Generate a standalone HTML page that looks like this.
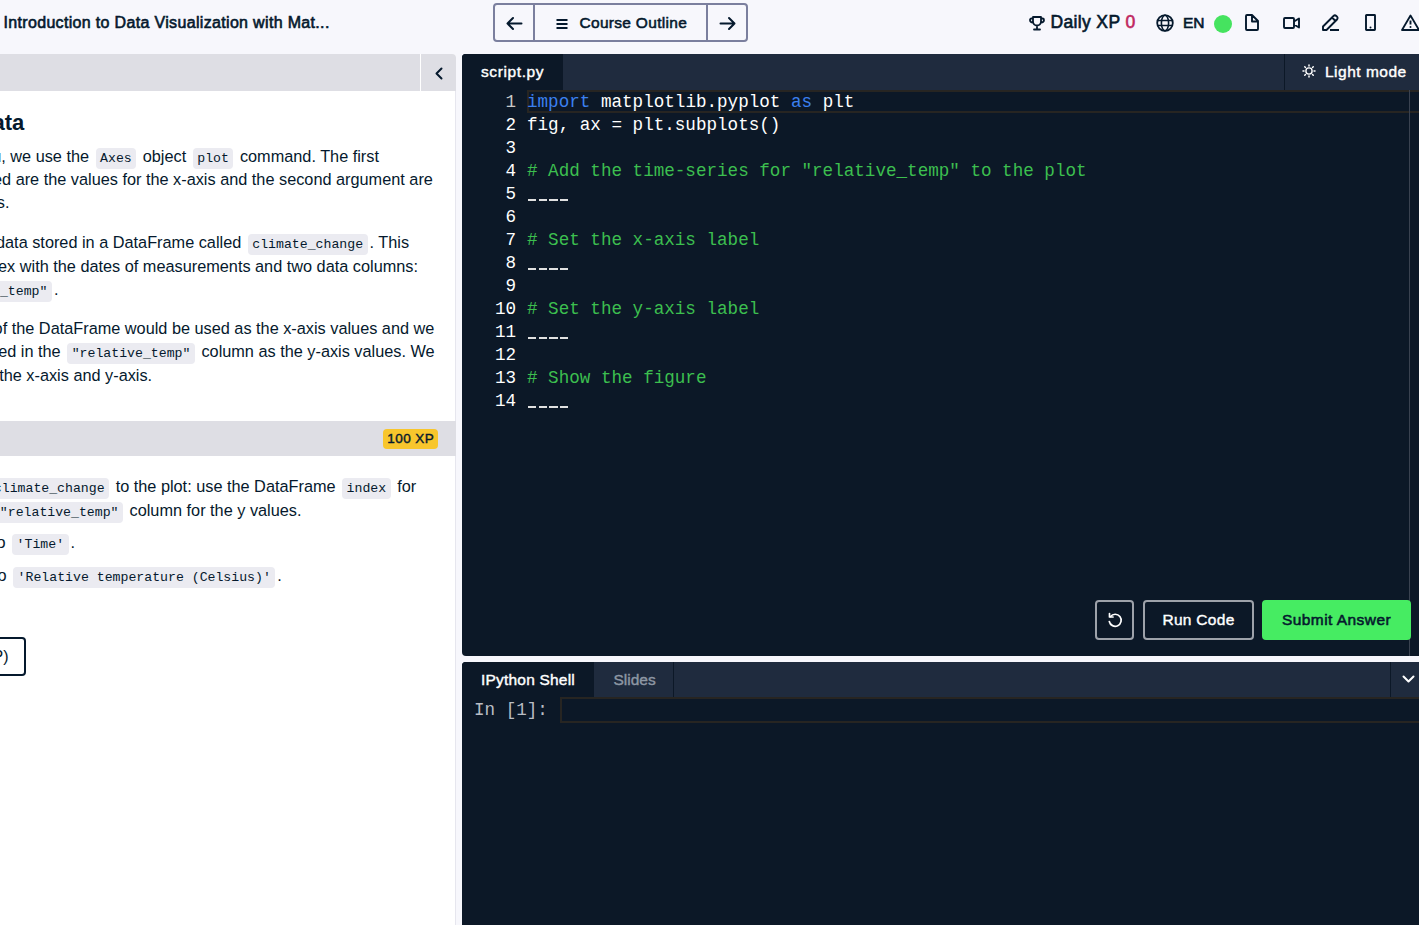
<!DOCTYPE html>
<html><head><meta charset="utf-8">
<style>
*{box-sizing:border-box;margin:0;padding:0}
html,body{width:1419px;height:925px;overflow:hidden;background:#f7f7fc;font-family:"Liberation Sans",sans-serif;color:#05192d}
.a{position:absolute}
#title{position:absolute;left:3.5px;top:12.5px;font-size:16px;letter-spacing:0.33px;font-weight:normal;-webkit-text-stroke:0.6px #05192d;white-space:nowrap;line-height:20px}
#nav{position:absolute;left:493px;top:3px;width:255px;height:39px;border:2px solid #7b7f9e;border-radius:4px}
#nav .d{position:absolute;top:0;width:2px;height:35px;background:#7b7f9e}
#nav .t{position:absolute;left:84.5px;top:9px;font-size:15.5px;letter-spacing:0.3px;font-weight:normal;-webkit-text-stroke:0.55px #05192d;line-height:18px;white-space:nowrap}
.tb{position:absolute;font-size:17.5px;line-height:20px;white-space:nowrap;font-weight:normal;-webkit-text-stroke:0.6px #05192d}
#left{position:absolute;left:0;top:54px;width:456px;height:871px;background:#fff;border-top-right-radius:4px;overflow:hidden}
#lscroll{position:absolute;left:455px;top:91px;width:1px;height:330px;background:#e6e6ee}
#lscroll2{position:absolute;left:455px;top:456px;width:1px;height:469px;background:#e6e6ee}
#lhead{position:absolute;left:0;top:0;width:456px;height:37px;background:#dedee4}
#lhead .dv{position:absolute;left:420px;top:0;width:1px;height:37px;background:#fff}
.ln{position:absolute;white-space:nowrap;font-size:16.3px;line-height:23px;color:#05192d;height:23px}
code{display:inline-block;font-family:"Liberation Mono",monospace;font-size:13.2px;line-height:21px;height:21px;background:#ebebf1;border-radius:4px;padding:0 4.5px;margin:0 2px;color:#05192d;vertical-align:baseline;position:relative;top:-0.5px}
#right{position:absolute;left:462px;top:54px;width:957px;height:602px;background:#0c1827;border-top-left-radius:4px;border-bottom-left-radius:4px;overflow:hidden}
#rtabs{position:absolute;left:0;top:0;width:957px;height:36px;background:#1f2b3e}
.tab{position:absolute;top:0;height:36px;font-size:15.5px;letter-spacing:0.3px;font-weight:normal;-webkit-text-stroke:0.4px currentColor;line-height:36px;color:#fff;white-space:nowrap}
.cl{position:absolute;left:65px;font-family:"Liberation Mono",monospace;font-size:17.6px;line-height:23px;height:23px;white-space:pre;color:#fff}
.nm{position:absolute;left:0;width:54px;text-align:right;font-family:"Liberation Mono",monospace;font-size:17.6px;line-height:23px;height:23px;color:#fff}
.kw{color:#3b80f0}
.us{position:absolute;left:66px;width:42.3px;height:2px;background:repeating-linear-gradient(90deg,#e0e0e0 0 8.4px,transparent 8.4px 10.58px)}
.cm{color:#3cbf4f}
#shell{position:absolute;left:462px;top:662px;width:957px;height:263px;background:#0c1827;border-top-left-radius:4px;overflow:hidden}
#stabs{position:absolute;left:0;top:0;width:957px;height:35px;background:#1f2b3e}
.btn{position:absolute;top:546px;height:40px;border:2px solid #9ea2aa;border-radius:4px;color:#fff;font-weight:normal;-webkit-text-stroke:0.4px currentColor;letter-spacing:0.3px;font-size:15.5px;line-height:36px;text-align:center;white-space:nowrap}
svg{position:absolute;overflow:visible}
</style></head>
<body>
<div id="title">Introduction to Data Visualization with Mat...</div>
<div id="nav">
  <div class="d" style="left:38px"></div><div class="d" style="left:211px"></div>
  <svg style="left:11px;top:12px" width="17" height="13" viewBox="0 0 17 13"><path d="M1.5 6.5H15.5M7 1L1.5 6.5L7 12" fill="none" stroke="#05192d" stroke-width="2" stroke-linecap="round" stroke-linejoin="round"/></svg>
  <svg style="left:61px;top:13.5px" width="12" height="10" viewBox="0 0 12 10"><path d="M0.5 1H11.5M0.5 5H11.5M0.5 9H11.5" fill="none" stroke="#05192d" stroke-width="2"/></svg>
  <div class="t">Course Outline</div>
  <svg style="left:223.5px;top:12px" width="17" height="13" viewBox="0 0 17 13"><path d="M1.5 6.5H15.5M10 1L15.5 6.5L10 12" fill="none" stroke="#05192d" stroke-width="2" stroke-linecap="round" stroke-linejoin="round"/></svg>
</div>

<!-- top right -->
<svg style="left:1029px;top:16px" width="16" height="15" viewBox="0 0 16 15"><path d="M4 1H12V5.5C12 7.7 10.2 9.5 8 9.5C5.8 9.5 4 7.7 4 5.5Z M4 2.5H2.5C1.7 2.5 1 3.2 1 4C1 5.4 2.3 6.5 4.2 6.5 M12 2.5H13.5C14.3 2.5 15 3.2 15 4C15 5.4 13.7 6.5 11.8 6.5 M8 9.5V13.5 M5 13.5H11" fill="none" stroke="#05192d" stroke-width="1.8" stroke-linejoin="round" stroke-linecap="round"/></svg>
<div class="tb" style="left:1050.5px;top:11.5px;letter-spacing:0.35px">Daily XP</div>
<div class="tb" style="left:1125.5px;top:11.5px;color:#c0265e;-webkit-text-stroke:0.6px #c0265e">0</div>
<svg style="left:1156px;top:14px" width="18" height="18" viewBox="0 0 18 18"><circle cx="9" cy="9" r="7.8" fill="none" stroke="#05192d" stroke-width="1.8"/><ellipse cx="9" cy="9" rx="3.6" ry="7.8" fill="none" stroke="#05192d" stroke-width="1.6"/><path d="M1.5 6.5H16.5M1.5 11.5H16.5" stroke="#05192d" stroke-width="1.6"/></svg>
<div class="tb" style="left:1183px;top:12.5px;font-size:15.5px">EN</div>
<div class="a" style="left:1214px;top:15px;width:18px;height:18px;border-radius:50%;background:#45e35f"></div>
<svg style="left:1245px;top:14px" width="14" height="17" viewBox="0 0 14 17"><path d="M1 2C1 1.4 1.4 1 2 1H7L13 7V15C13 15.6 12.6 16 12 16H2C1.4 16 1 15.6 1 15Z M7 1V7.5H13" fill="none" stroke="#05192d" stroke-width="1.9" stroke-linejoin="round"/></svg>
<svg style="left:1283px;top:17px" width="17" height="12" viewBox="0 0 17 12"><path d="M1 2C1 1.4 1.4 1 2 1H10C10.6 1 11 1.4 11 2V10C11 10.6 10.6 11 10 11H2C1.4 11 1 10.6 1 10Z M11 4.5L16 1.5V10.5L11 7.5" fill="none" stroke="#05192d" stroke-width="1.9" stroke-linejoin="round"/></svg>
<svg style="left:1322px;top:14px" width="18" height="17" viewBox="0 0 18 17"><path d="M1 16V12.5L11.5 2C12.3 1.2 13.5 1.2 14.3 2L15 2.7C15.8 3.5 15.8 4.7 15 5.5L4.5 16Z M10 3.5L13.5 7 M8 16H17" fill="none" stroke="#05192d" stroke-width="1.9" stroke-linejoin="round"/></svg>
<svg style="left:1365px;top:14px" width="11" height="17" viewBox="0 0 11 17"><path d="M1 1.5C1 1.2 1.2 1 1.5 1H9.5C9.8 1 10 1.2 10 1.5V15.5C10 15.8 9.8 16 9.5 16H1.5C1.2 16 1 15.8 1 15.5Z" fill="none" stroke="#05192d" stroke-width="1.9"/><circle cx="5.5" cy="13.4" r="1" fill="#05192d"/></svg>
<svg style="left:1401px;top:14px" width="19" height="17" viewBox="0 0 19 17"><path d="M9.5 1.5L18 16H1Z" fill="none" stroke="#05192d" stroke-width="1.8" stroke-linejoin="round"/><path d="M9.5 6.5V10.5" stroke="#05192d" stroke-width="1.9"/><circle cx="9.5" cy="13" r="1" fill="#05192d"/></svg>

<div id="left">
  <div id="lhead"><div class="dv"></div>
    <svg style="left:435px;top:12.5px" width="8" height="13" viewBox="0 0 8 13"><path d="M6.5 1.5L1.5 6.5L6.5 11.5" fill="none" stroke="#05192d" stroke-width="2" stroke-linecap="round" stroke-linejoin="round"/></svg>
  </div>
  <div class="ln" id="hd" style="left:-21px;top:55.8px;font-size:22px;font-weight:bold;line-height:26px">data</div>
  <div class="ln" id="l1" style="left:-25px;top:91px">you, we use the <code>Axes</code> object <code>plot</code> command. The first</div>
  <div class="ln" id="l2" style="left:-7px;top:114px">ed are the values for the x-axis and the second argument are</div>
  <div class="ln" id="l3" style="left:-12.3px;top:137px">es.</div>
  <div class="ln" id="l4" style="left:-4px;top:177px">data stored in a DataFrame called <code>climate_change</code>. This</div>
  <div class="ln" id="l5" style="left:-11px;top:201px">dex with the dates of measurements and two data columns:</div>
  <div class="ln" id="l6" style="left:-77.8px;top:224px"><code>"relative_temp"</code>.</div>
  <div class="ln" id="l7" style="left:-6.4px;top:263px">of the DataFrame would be used as the x-axis values and we</div>
  <div class="ln" id="l8" style="left:-19px;top:286px">used in the <code>"relative_temp"</code> column as the y-axis values. We</div>
  <div class="ln" id="l9" style="left:-0.8px;top:310px">the x-axis and y-axis.</div>
  <div class="a" style="left:0;top:367px;width:456px;height:35px;background:#dedee4"></div>
  <div class="a" style="left:383px;top:375px;width:55px;height:20px;background:#f8c62c;border-radius:4px;font-size:13.5px;font-weight:normal;-webkit-text-stroke:0.4px #05192d;line-height:20px;text-align:center;letter-spacing:0.45px;padding-left:0.45px">100 XP</div>
  <div class="ln" id="l10" style="left:-12.7px;top:421px"><code>climate_change</code> to the plot: use the DataFrame <code>index</code> for</div>
  <div class="ln" id="l11" style="left:-6.7px;top:445px"><code>"relative_temp"</code> column for the y values.</div>
  <div class="ln" id="l12" style="left:-8px;top:477px">to <code>'Time'</code>.</div>
  <div class="ln" id="l13" style="left:-7px;top:510px">to <code>'Relative temperature (Celsius)'</code>.</div>
  <div class="a" id="hint" style="left:-200px;top:583px;width:226px;height:39px;border:2px solid #05192d;border-radius:4px;font-size:16px;font-weight:normal;line-height:35px;text-align:right;padding-right:15.5px;white-space:nowrap">Take Hint (-30 XP)</div>
</div>
<div id="lscroll"></div><div id="lscroll2"></div>

<div id="right">
  <div id="rtabs">
    <div class="tab" style="left:0;width:101px;background:#0c1827;padding-left:19px;letter-spacing:0.6px">script.py</div>
    <div class="a" style="left:822px;top:0;width:1px;height:36px;background:#0c1827"></div>
    <svg style="left:840.1px;top:10.1px" width="14" height="14" viewBox="0 0 14 14"><circle cx="7" cy="7" r="3.1" fill="none" stroke="#fff" stroke-width="1.4"/><path d="M12.00 7.00L13.00 7.00M10.54 10.54L11.24 11.24M7.00 12.00L7.00 13.00M3.46 10.54L2.76 11.24M2.00 7.00L1.00 7.00M3.46 3.46L2.76 2.76M7.00 2.00L7.00 1.00M10.54 3.46L11.24 2.76" stroke="#fff" stroke-width="1.5" stroke-linecap="round"/></svg>
    <div class="tab" style="left:863px;letter-spacing:0.5px">Light mode</div>
  </div>
  <div class="a" style="left:65px;top:36px;width:892px;height:23px;border:2px solid #272522;border-right:none"></div>
  <div class="a" style="left:947px;top:36px;width:1px;height:566px;background:#3a4250"></div>
  <div class="a" style="left:0;top:1px;width:957px;height:400px"><div class="nm" style="top:36px;color:#c8c8c8">1</div><div class="cl" style="top:36px"><span class="kw">import</span> matplotlib.pyplot <span class="kw">as</span> plt</div>
  <div class="nm" style="top:59px">2</div><div class="cl" style="top:59px">fig, ax = plt.subplots()</div>
  <div class="nm" style="top:82px">3</div>
  <div class="nm" style="top:105px">4</div><div class="cl cm" style="top:105px"># Add the time-series for "relative_temp" to the plot</div>
  <div class="nm" style="top:128px">5</div>
  <div class="nm" style="top:151px">6</div>
  <div class="nm" style="top:174px">7</div><div class="cl cm" style="top:174px"># Set the x-axis label</div>
  <div class="nm" style="top:197px">8</div>
  <div class="nm" style="top:220px">9</div>
  <div class="nm" style="top:243px">10</div><div class="cl cm" style="top:243px"># Set the y-axis label</div>
  <div class="nm" style="top:266px">11</div>
  <div class="nm" style="top:289px">12</div>
  <div class="nm" style="top:312px">13</div><div class="cl cm" style="top:312px"># Show the figure</div>
  <div class="nm" style="top:335px">14</div></div><div class="us" style="top:145px"></div><div class="us" style="top:214px"></div><div class="us" style="top:283px"></div><div class="us" style="top:352px"></div>

  <div class="btn" style="left:633px;width:39px">
    <svg style="left:10px;top:10px" width="16" height="16" viewBox="0 0 16 16"><path d="M3.5 4.5A6 6 0 1 1 2.3 9.5" fill="none" stroke="#fff" stroke-width="1.7" stroke-linecap="round"/><path d="M2.5 1.5V5H6" fill="none" stroke="#fff" stroke-width="1.7" stroke-linecap="round" stroke-linejoin="round"/></svg>
  </div>
  <div class="btn" style="left:681px;width:111px">Run Code</div>
  <div class="btn" style="left:800px;width:149px;background:#46ec62;border-color:#46ec62;color:#05192d;-webkit-text-stroke:0.55px #05192d;letter-spacing:0.45px">Submit Answer</div>
</div>

<div id="shell">
  <div id="stabs">
    <div class="tab" style="left:0;width:132px;height:35px;background:#0c1827;padding-left:19px;line-height:36px;letter-spacing:0.2px">IPython Shell</div>
    <div class="tab" style="left:132px;width:80px;height:35px;padding-left:19.5px;color:#8e97a4;line-height:36px;letter-spacing:0px">Slides</div>
    <div class="a" style="left:211px;top:0;width:1px;height:36px;background:#0c1827"></div>
    <div class="a" style="left:928px;top:0;width:1px;height:35px;background:#0c1827"></div>
    <svg style="left:940px;top:13px" width="13" height="9" viewBox="0 0 13 9"><path d="M1.5 1.5L6.5 6.5L11.5 1.5" fill="none" stroke="#fff" stroke-width="2" stroke-linecap="round" stroke-linejoin="round"/></svg>
  </div>
  <div class="a" style="left:12px;top:37px;font-family:'Liberation Mono',monospace;font-size:17.6px;line-height:23px;color:#b9bdc4;white-space:pre">In [1]:</div>
  <div class="a" style="left:98px;top:35px;width:859px;height:26px;border:2px solid #272522;border-right:none"></div>
</div>
</body></html>
